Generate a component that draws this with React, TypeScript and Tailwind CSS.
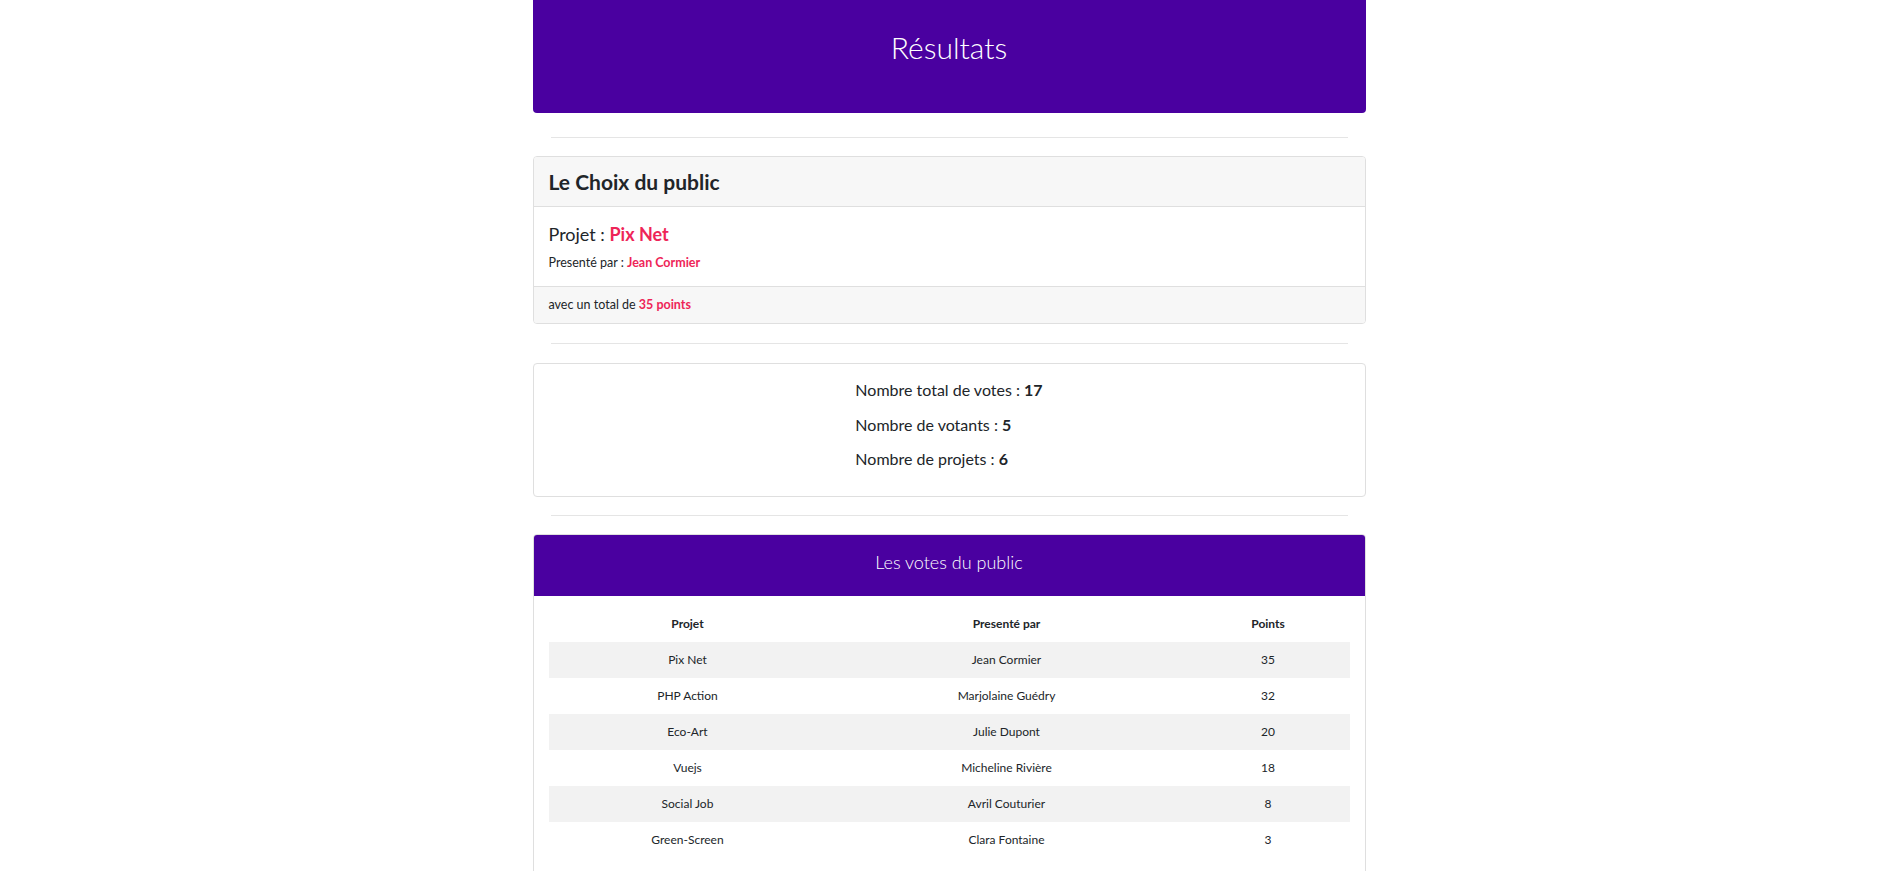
import React from "react";

const rows = [
  ["Pix Net", "Jean Cormier", "35"],
  ["PHP Action", "Marjolaine Guédry", "32"],
  ["Eco-Art", "Julie Dupont", "20"],
  ["Vuejs", "Micheline Rivière", "18"],
  ["Social Job", "Avril Couturier", "8"],
  ["Green-Screen", "Clara Fontaine", "3"],
];

export default function App() {
  return (
    <div className="min-h-screen bg-white text-[#212529]" style={{ fontFamily: "Lato, 'Noto Sans', sans-serif" }}>
      <div className="mx-auto w-[833px] pb-10">
        <div className="bg-[#4a00a0] rounded-b-[4px] h-[113px] pt-[29px] text-center">
          <h1 className="text-[30px] leading-[36px] font-light text-white">Résultats</h1>
        </div>

        <hr className="mx-[18px] mt-[24px] mb-[18px] border-0 border-t border-[#e5e5e5]" />

        <div className="border border-[#dfdfdf] rounded-[4px] overflow-hidden">
          <div className="bg-[#f7f7f7] h-[50px] px-[15px] flex items-center border-b border-[#dfdfdf]">
            <h2 className="text-[21px] font-bold leading-[28px] text-[#212529]">Le Choix du public</h2>
          </div>
          <div className="h-[80px] px-[15px] pt-[15px] border-b border-[#dfdfdf]">
            <div className="text-[18px] leading-[24px]">
              Projet : <span className="font-bold text-[#ee2558]">Pix Net</span>
            </div>
            <div className="mt-[8px] text-[12.5px] leading-[18px]">
              Presenté par : <span className="font-bold text-[#ee2558]">Jean Cormier</span>
            </div>
          </div>
          <div className="bg-[#f7f7f7] h-[36px] px-[15px] flex items-center text-[12.5px]">
            <span>
              avec un total de <span className="font-bold text-[#ee2558]">35 points</span>
            </span>
          </div>
        </div>

        <hr className="mx-[18px] mt-[19px] mb-[19px] border-0 border-t border-[#e5e5e5]" />

        <div className="border border-[#dfdfdf] rounded-[4px] h-[134px] pt-[14px] flex justify-center">
          <div className="text-[16px] leading-[24px] flex flex-col gap-[10.5px]">
            <div>
              Nombre total de votes : <span className="font-bold">17</span>
            </div>
            <div>
              Nombre de votants : <span className="font-bold">5</span>
            </div>
            <div>
              Nombre de projets : <span className="font-bold">6</span>
            </div>
          </div>
        </div>

        <hr className="mx-[18px] mt-[18px] mb-[18px] border-0 border-t border-[#e5e5e5]" />

        <div className="border border-[#dfdfdf] rounded-[4px] overflow-hidden">
          <div className="bg-[#4a00a0] h-[61px] pt-[14px] text-center">
            <h3 className="text-[18px] leading-[26px] font-light text-white">Les votes du public</h3>
          </div>
          <div className="px-[15px] pt-[10px] pb-[20px]">
            <table className="w-full text-[12px] text-center border-collapse">
              <thead>
                <tr className="h-[36px]">
                  <th className="w-[278px] font-bold">Projet</th>
                  <th className="w-[360px] font-bold">Presenté par</th>
                  <th className="w-[163px] font-bold">Points</th>
                </tr>
              </thead>
              <tbody>
                {rows.map((r, i) => (
                  <tr key={i} className={i % 2 === 0 ? "h-[36px] bg-[#f2f2f2]" : "h-[36px] bg-white"}>
                    <td>{r[0]}</td>
                    <td>{r[1]}</td>
                    <td>{r[2]}</td>
                  </tr>
                ))}
              </tbody>
            </table>
          </div>
        </div>
      </div>
    </div>
  );
}
